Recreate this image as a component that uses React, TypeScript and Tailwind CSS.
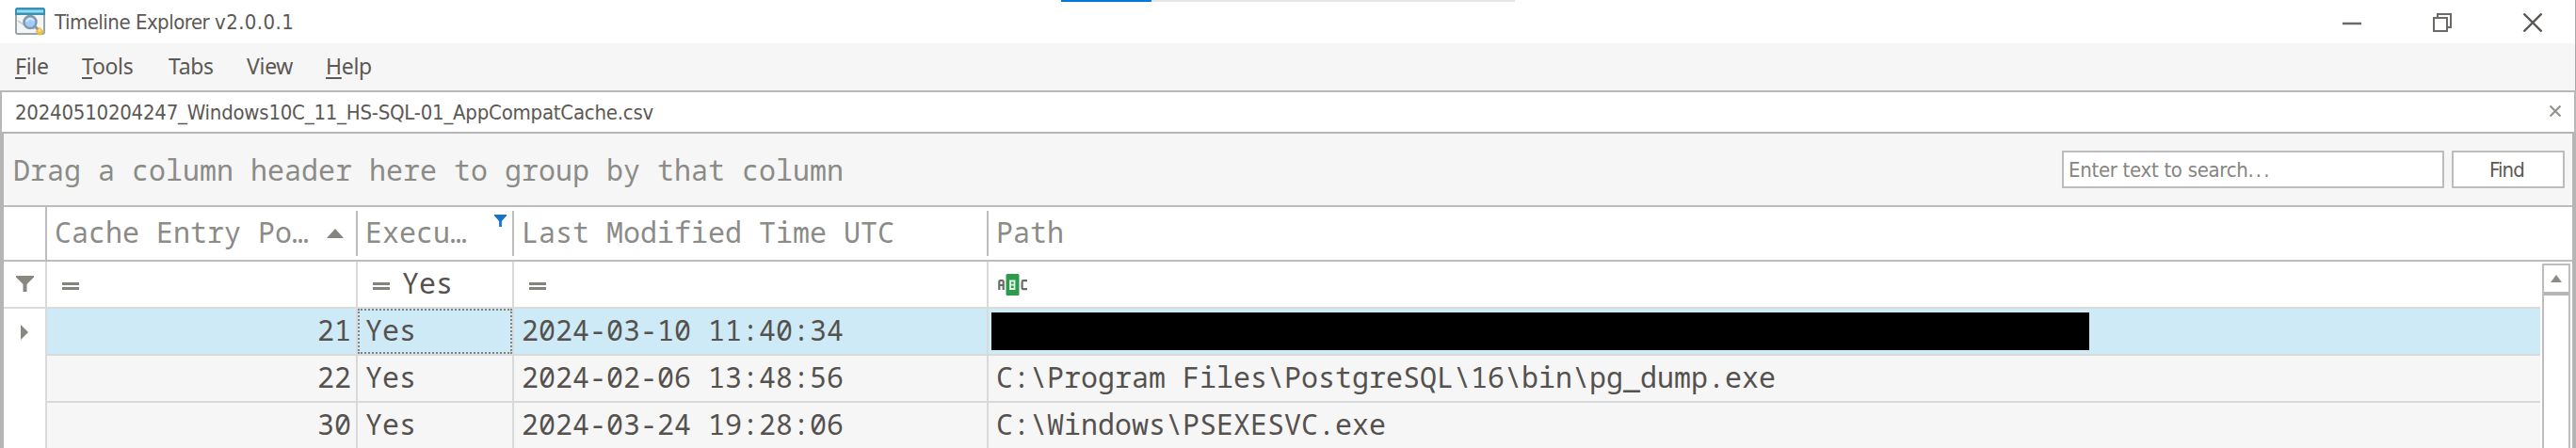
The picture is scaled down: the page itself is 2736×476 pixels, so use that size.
import type { ReactNode } from "react";

const mono = "font-['Noto_Sans_Mono','DejaVu_Sans_Mono',monospace] text-[30px] whitespace-pre";
const ui = "font-['DejaVu_Sans_Condensed','DejaVu_Sans',sans-serif] whitespace-pre";
const columns = "grid grid-cols-[46px_330px_166px_504px_1fr]";

const rows = [
  { pos: "21", executed: "Yes", modified: "2024-03-10 11:40:34", path: null, current: true },
  { pos: "22", executed: "Yes", modified: "2024-02-06 13:48:56", path: "C:\\Program Files\\PostgreSQL\\16\\bin\\pg_dump.exe", current: false },
  { pos: "30", executed: "Yes", modified: "2024-03-24 19:28:06", path: "C:\\Windows\\PSEXESVC.exe", current: false },
];

function AppIcon() {
  return (
    <svg width="34" height="32" viewBox="0 0 34 32" className="shrink-0">
      <rect x="1" y="1" width="30" height="27" rx="2" fill="#f4f6f6" stroke="#97a5a8" strokeWidth="2" />
      <path d="M0 3q0-3 3-3h26q3 0 3 3v5H0z" fill="#3f8fb0" />
      <path d="M2 2.5h28v3H2z" fill="#8fe0f5" />
      <path d="M3 14l7 5 6-3M19 23l4-3" fill="none" stroke="#b9c2c4" strokeWidth="1.5" />
      <path d="M21 20l5 5" stroke="#8a9aa5" strokeWidth="3" />
      <circle cx="16" cy="15.500" r="6.500" fill="#9fccff" stroke="#8497a8" strokeWidth="2.500" />
      <path d="M12 15q4-6 8-1" stroke="#d5eaff" strokeWidth="2" fill="none" />
      <path d="M26 21l5 4.500-5 4.500-4.500-4.500z" fill="#f2bd3a" />
      <path d="M26 22.500l2 2-2 2-2-2z" fill="#ffdf85" />
    </svg>
  );
}

function Funnel({ className }: { className: string }) {
  return (
    <svg viewBox="0 0 19 17" preserveAspectRatio="none" className={className} fill="currentColor">
      <path d="M0 0h19v1.500L11.500 9v8h-4V9L0 1.500z" />
    </svg>
  );
}

function Equals() {
  return (
    <svg width="18" height="8" viewBox="0 0 18 8" className="mt-[22px] shrink-0">
      <path d="M0 0h18v3H0zM0 5h18v3H0z" fill="#84847f" />
    </svg>
  );
}

function AbcIcon() {
  return (
    <svg width="32" height="24" viewBox="0 0 32 24" className="mt-[13px]">
      <rect x="8.500" y="0" width="14" height="23" rx="1.500" fill="#2f9a4c" />
      <path d="M1.300 17V8.200Q1.300 7 2.500 7h2Q5.700 7 5.700 8.200V17M1.300 12h4.400" fill="none" stroke="#6a6a66" strokeWidth="2.200" />
      <path d="M13 7.500h4.500v8.500H13zM13 11.700h4.500" fill="none" stroke="#e6f5ea" strokeWidth="1.800" />
      <path d="M31 7.200h-4.200q-1.200 0-1.200 1.300v6.500q0 1.200 1.200 1.200H31" fill="none" stroke="#6a6a66" strokeWidth="2.200" />
    </svg>
  );
}

function Menu({ children, width }: { children: ReactNode; width: string }) {
  return <span className={width}>{children}</span>;
}

function Mnemonic({ children }: { children: string }) {
  return <span className="underline decoration-2 underline-offset-[3px]">{children}</span>;
}

export default function App() {
  return (
    <div className="flex h-[476px] w-[2736px] flex-col overflow-hidden bg-white text-[#5c5854]">
      <header className="relative flex h-[46px] border-r border-[#a8a8a8] pl-4 pt-2">
        <AppIcon />
        <div className={`${ui} ml-[8px] mt-px text-[22px] leading-[30px] tracking-[-0.5px]`}>
          Timeline Explorer <span className="tracking-[0.4px]">v2.0.0.1</span>
        </div>
        <div className="absolute left-[1127px] top-0 flex h-[2px] w-[482px] bg-[#e5e5e5]">
          <div className="w-[96px] bg-[#0078d7]" />
        </div>
        <svg width="212" height="20" viewBox="0 0 212 20" className="ml-auto mr-[35px] mt-[6px]" fill="none" stroke="#6e6965" strokeWidth="2">
          <path d="M0 11h20" strokeWidth="2.500" />
          <path d="M97 5h14v14H97zM101 5V1h14v14h-4" />
          <path d="M192.500.5l19 19M211.500.5l-19 19" stroke="#5c5854" strokeWidth="2.400" />
        </svg>
      </header>

      <nav className="flex h-[50px] border-r border-[#a8a8a8] bg-[#f6f6f6] pl-4 font-['Noto_Sans',sans-serif] text-[23px] leading-[48px] tracking-[-0.3px]">
        <Menu width="w-[71px]"><Mnemonic>F</Mnemonic>ile</Menu>
        <Menu width="w-[92px]"><Mnemonic>T</Mnemonic>ools</Menu>
        <Menu width="w-[83px]">Tabs</Menu>
        <Menu width="w-[84px]">View</Menu>
        <Menu width="w-[90px]"><Mnemonic>H</Mnemonic>elp</Menu>
      </nav>

      <div className="flex h-[44px] shrink-0 items-start justify-between border-x-2 border-t-2 border-[#b8b8b8] bg-white pl-[14px] pr-[14px]">
        <div className={`${ui} text-[22px] leading-[43px] tracking-[-0.23px]`}>20240510204247_Windows10C_11_HS-SQL-01_AppCompatCache.csv</div>
        <svg width="12" height="12" viewBox="0 0 12 12" className="mt-[14px]" stroke="#93938f" strokeWidth="2.200">
          <path d="M.5.5l11 11M11.500.5l-11 11" />
        </svg>
      </div>

      <main className="flex min-h-0 flex-1 flex-col border-x-4 border-t-2 border-[#b5b5b5]">
        <div className="flex h-[76px] shrink-0 items-start bg-[#f6f6f6] pl-[10px] pr-2">
          <div className={`${mono} flex-1 leading-[77px] text-[#8b8b87]`}>Drag a column header here to group by that column</div>
          <div className={`${ui} mt-[18px] flex h-10 gap-2 text-[22px] leading-[37px] tracking-[-0.3px]`}>
            <div className="w-[406px] border-2 border-[#bdbdbd] bg-white pl-[5px] text-[#858581]">Enter text to search<span className="tracking-[2px]">...</span></div>
            <div className="w-[120px] border-2 border-[#bdbdbd] bg-white pr-[3px] text-center tracking-[-0.8px]">Find</div>
          </div>
        </div>

        <div className={`${columns} ${mono} h-[60px] shrink-0 border-y-2 border-[#bdbdbd] leading-[53px] text-[#8b8b87]`}>
          <div className="border-r-2 border-[#bdbdbd]" />
          <div className="flex items-center">
            <span className="flex-1 self-start pl-[8px]">Cache Entry Po…</span>
            <svg width="18" height="10" viewBox="0 0 18 10" className="mr-[13px]"><path d="M9 0l9 10H0z" fill="#84847f" /></svg>
            <span className="h-12 w-[2px] bg-[#bdbdbd]" />
          </div>
          <div className="flex items-center">
            <span className="flex-1 self-start pl-[8px]">Execu…</span>
            <Funnel className="mr-[6px] mt-[8px] h-[13px] w-[13px] self-start text-[#1873c4]" />
            <span className="h-12 w-[2px] bg-[#bdbdbd]" />
          </div>
          <div className="flex items-center">
            <span className="flex-1 self-start pl-[8px]">Last Modified Time UTC</span>
            <span className="h-12 w-[2px] bg-[#bdbdbd]" />
          </div>
          <span className="pl-[8px]">Path</span>
        </div>

        <div className="flex min-h-0 flex-1">
          <div className={`${mono} w-[2694px] leading-[45px] text-[#55514e]`}>
            <div className={`${columns} h-[50px] border-b-2 border-[#dadada]`}>
              <div className="border-r-2 border-[#dadada] pl-[13px]"><Funnel className="mt-[15px] h-[17px] w-[19px] text-[#8a8680]" /></div>
              <div className="flex border-r-2 border-[#dadada] pl-[16px]"><Equals /></div>
              <div className="flex gap-[13px] border-r-2 border-[#dadada] pl-[16px]"><Equals />Yes</div>
              <div className="flex border-r-2 border-[#dadada] pl-[16px]"><Equals /></div>
              <div className="pl-[10px]"><AbcIcon /></div>
            </div>
            {rows.map((row) => (
              <div key={row.pos} className={row.current ? `${columns} h-[50px] bg-[#cdeaf6]` : `${columns} h-[50px] bg-[#f6f6f6]`}>
                <div className="border-r-2 border-[#dadada] bg-white pl-[18px]">
                  {row.current && <svg width="8" height="16" viewBox="0 0 8 16" className="mt-[17px]"><path d="M0 0l8 8-8 8z" fill="#8a8680" /></svg>}
                </div>
                <div className="border-b-2 border-r-2 border-[#d8dada] pr-[5px] text-right">{row.pos}</div>
                <div className="border-b-2 border-r-2 border-[#d8dada]">
                  <div className={row.current ? "h-12 border-2 border-dotted border-[#808584] pl-[6px] leading-[41px]" : "pl-[8px]"}>{row.executed}</div>
                </div>
                <div className="border-b-2 border-r-2 border-[#d8dada] pl-[8px]">{row.modified}</div>
                <div className={row.path ? "border-b-2 border-[#d8dada] pl-[8px]" : "border-b-2 border-[#d8dada] pl-[3px] pt-1"}>
                  {row.path ?? <div className="h-10 w-[1166px] bg-black" />}
                </div>
              </div>
            ))}
          </div>
          <div className="ml-[2px] mt-[2px] flex w-[30px] flex-col border-x-2 border-t-2 border-[#bdbdbd] bg-white">
            <div className="flex h-[32px] items-center justify-center border-b-4 border-[#b5b5b5]">
              <svg width="12" height="8" viewBox="0 0 12 8"><path d="M6 0l6 8H0z" fill="#8f8b87" /></svg>
            </div>
          </div>
        </div>
      </main>
    </div>
  );
}
